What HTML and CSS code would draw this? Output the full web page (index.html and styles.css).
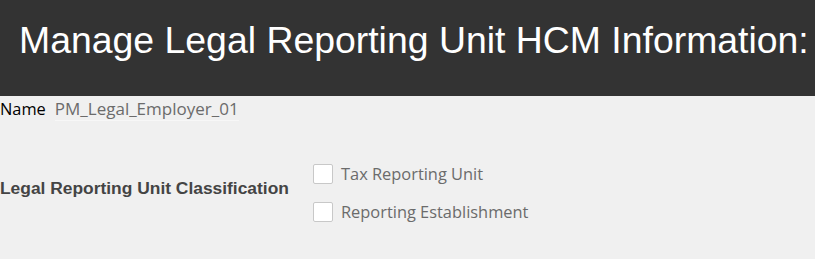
FILE: index.html
```html
<!DOCTYPE html>
<html>
<head>
    <title>Manage Legal Reporting Unit HCM Information</title>
    <link rel="stylesheet" href="styles.css">
</head>
<body>
    <div class="header">
        <h1>Manage Legal Reporting Unit HCM Information:</h1>
    </div>

    <div class="content">
        <div class="namerow">
            <span class="namelabel">Name</span>
            <span class="namevalue">PM_Legal_Employer_01</span>
        </div>

        <div class="classrow">
            <div class="classlabel">Legal Reporting Unit Classification</div>
            <div class="options">
                <label class="option"><span class="box"></span>Tax Reporting Unit</label>
                <label class="option"><span class="box"></span>Reporting Establishment</label>
            </div>
        </div>
    </div>
</body>
</html>
```

FILE: styles.css
```css
body
{
    margin: 0;
    background-color: #F0F0F0;
    font-family: "Open Sans", "Noto Sans", sans-serif;
}
.header
{
    background-color: #333333;
    height: 96px;
    padding-left: 19px;
    overflow: hidden;
    white-space: nowrap;
}
.header h1
{
    margin: 0;
    padding-top: 19px;
    font-family: "Liberation Sans", Arial, sans-serif;
    font-weight: normal;
    font-size: 37.4px;
    line-height: 42px;
    color: #FFFFFF;
}
.namerow
{
    display: flex;
    align-items: baseline;
    gap: 9px;
    padding-top: 2px;
    font-size: 16.4px;
    line-height: 22px;
}
.namelabel
{
    color: #000000;
}
.namevalue
{
    font-size: 17px;
    color: #6B6B6B;
    border-bottom: 1px solid #F7F7F7;
}
.classrow
{
    display: flex;
    align-items: center;
    margin-top: 43px;
}
.classlabel
{
    width: 313px;
    font-family: "Liberation Sans", Arial, sans-serif;
    font-weight: bold;
    font-size: 17.4px;
    color: #444444;
    padding-bottom: 10px;
}
.options
{
    display: flex;
    flex-direction: column;
    gap: 18px;
}
.option
{
    display: flex;
    align-items: center;
    gap: 8px;
    font-size: 16.4px;
    line-height: 20px;
    color: #6B6B6B;
}
.box
{
    width: 18px;
    height: 18px;
    border: 1px solid #C8C8C8;
    border-radius: 2px;
    background-color: #FFFFFF;
}
```
